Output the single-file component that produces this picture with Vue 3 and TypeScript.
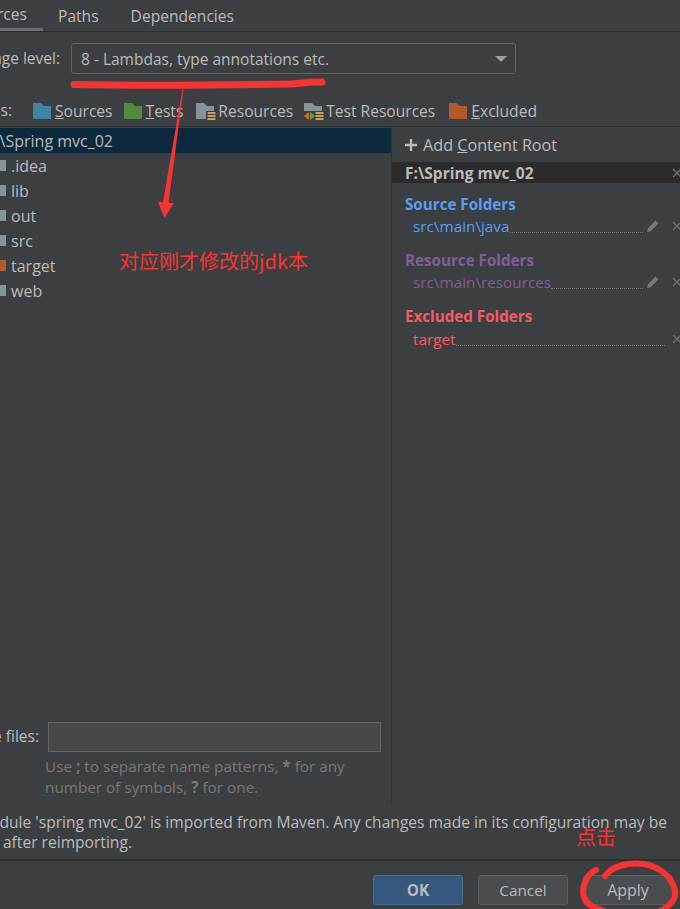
<script setup lang="ts">
interface Tag { key: string; after: string; icon: string }
const marks: Tag[] = [
  { key: 'S', after: 'ources', icon: 'sources' },
  { key: 'T', after: 'ests', icon: 'tests' },
  { key: '', after: 'Resources', icon: 'resources' },
  { key: '', after: 'Test Resources', icon: 'testres' },
  { key: 'E', after: 'xcluded', icon: 'excluded' },
]
const folderColors: Record<string, string> = {
  sources: '#3e86a0', tests: '#548a3f', resources: '#87939a', testres: '#87939a', excluded: '#b3592b',
}
const tree = [
  { name: '.idea', color: '#87939a' },
  { name: 'lib', color: '#87939a' },
  { name: 'out', color: '#87939a' },
  { name: 'src', color: '#87939a' },
  { name: 'target', color: '#b3592b' },
  { name: 'web', color: '#87939a' },
]
const groups = [
  { title: 'Source Folders', path: 'src\\main\\java', cls: 'blue', edit: true },
  { title: 'Resource Folders', path: 'src\\main\\resources', cls: 'purple', edit: true },
  { title: 'Excluded Folders', path: 'target', cls: 'red', edit: false },
]
</script>

<template>
  <div class="page">
    <nav class="tabs">
      <div class="tab-first"><span>Sources</span></div>
      <span class="tab paths">Paths</span>
      <span class="tab deps">Dependencies</span>
    </nav>

    <div class="level">
      <div class="level-label"><span>Language level:</span></div>
      <div class="combo">
        <span>8 - Lambdas, type annotations etc.</span>
        <i class="caret"></i>
      </div>
    </div>

    <div class="marks">
      <div class="marks-label"><span>Mark as:</span></div>
      <div v-for="m in marks" :key="m.icon" class="mark" :class="'m-' + m.icon">
        <svg width="22" height="18" viewBox="0 0 22 18">
          <path d="M0 1h8l3 3h7v13H0z" :fill="folderColors[m.icon]" />
          <g v-if="m.icon === 'resources' || m.icon === 'testres'">
            <rect x="10" y="9" width="12" height="9" fill="#3c3f41" />
            <path d="M11.500 11h8M11.500 14h8M11.500 17h8" stroke="#c9a15a" stroke-width="2" />
          </g>
          <g v-if="m.icon === 'testres'">
            <rect x="0" y="9" width="11" height="9" fill="#3c3f41" />
            <path d="M5 10v8L0 14z" fill="#e0672b" />
            <path d="M6 10v8l5-4z" fill="#62a744" />
          </g>
        </svg>
        <span><u v-if="m.key">{{ m.key }}</u>{{ m.after }}</span>
      </div>
    </div>

    <div class="split">
      <section class="left">
        <div class="root-row"><div class="root-name"><span>F:\Spring mvc_02</span></div></div>
        <div v-for="t in tree" :key="t.name" class="tree-row">
          <i class="tree-icon" :style="{ background: t.color }"></i>
          <span>{{ t.name }}</span>
        </div>
        <div class="spacer"></div>
        <div class="exclude">
          <div class="exclude-label"><span>Exclude files:</span></div>
          <div class="exclude-input"></div>
        </div>
        <p class="hint">Use <b>;</b> to separate name patterns, <b>*</b> for any<br />number of symbols, <b>?</b> for one.</p>
      </section>

      <aside class="right">
        <div class="add-root">
          <svg width="12" height="12" viewBox="0 0 12 12"><path d="M6 0v12M0 6h12" stroke="#bbb" stroke-width="2.400" /></svg>
          <span>Add <u>C</u>ontent Root</span>
        </div>
        <div class="root-head">
          <b>F:\Spring mvc_02</b>
          <svg class="x" width="10" height="10" viewBox="0 0 10 10"><path d="M1 1l8 8M9 1l-8 8" stroke="#6f7173" stroke-width="1.300" /></svg>
        </div>
        <div v-for="g in groups" :key="g.title" class="group" :class="g.cls">
          <h4>{{ g.title }}</h4>
          <div class="path-row">
            <span class="path">{{ g.path }}</span>
            <i class="dots"></i>
            <svg v-if="g.edit" class="pencil" width="14" height="14" viewBox="0 0 14 14"><path d="M1 13l.8-3.600L9.600 1.600l2.800 2.800-7.800 7.800zM10.600.6l2.800 2.800" fill="#77797b" /></svg>
            <svg class="x" width="10" height="10" viewBox="0 0 10 10"><path d="M1 1l8 8M9 1l-8 8" stroke="#6f7173" stroke-width="1.300" /></svg>
          </div>
        </div>
      </aside>
    </div>

    <div class="message">
      <div class="line-one"><span>Module 'spring mvc_02' is imported from Maven. Any changes made in its configuration may be</span></div>
      <div class="line-two"><span>lost after reimporting.</span></div>
    </div>

    <footer class="actions">
      <button class="btn primary">OK</button>
      <button class="btn">Cancel</button>
      <button class="btn apply">Apply</button>
    </footer>

    <svg class="ink" width="680" height="909" viewBox="0 0 680 909">
      <path d="M74 84.500C120 85.500 230 85 290 84C300 83.500 305 82 322 82" fill="none" stroke="#fb3232" stroke-width="7" stroke-linecap="round" />
      <path d="M182.500 89L183.500 89L168.500 203L174 203L164.500 218L158 202L163 202z" fill="#fb3232" />
      <path d="M596 870C586 874 581 888 584 897C587 905 594 908 604 911M605 876C612 866 628 862 644 864C660 867 672 877 675 890C677 900 670 906 660 911" fill="none" stroke="#fb3232" stroke-width="6" stroke-linecap="round" />
    </svg>
    <div class="note note-main">对应刚才修改的jdk本</div>
    <div class="note note-click">点击</div>
  </div>
</template>

<style>
html, body { margin: 0; background: #3c3f41; }
</style>

<style scoped>
.page {
  position: relative;
  width: 680px;
  height: 909px;
  overflow: hidden;
  display: flex;
  flex-direction: column;
  background: #3c3f41;
  color: #bbbbbb;
  font-family: "Open Sans", "Noto Sans", "Noto Sans CJK SC", sans-serif;
  font-size: 15.500px;
  line-height: 20px;
}
.tabs {
  flex: none;
  height: 31px;
  display: flex;
  align-items: center;
  border-bottom: 1px solid #2d2f30;
  font-size: 15.600px;
}
.tab-first {
  width: 43px;
  height: 31px;
  display: flex;
  justify-content: flex-end;
  align-items: center;
  padding-right: 16px;
  box-sizing: border-box;
  border-bottom: 3px solid #6a6e72;
  white-space: nowrap;
}
.tab { white-space: nowrap; }
.paths { margin-left: 15px; }
.deps { margin-left: 32px; }
.level {
  flex: none;
  height: 63px;
  display: flex;
  align-items: flex-start;
  padding-top: 11px;
  box-sizing: border-box;
}
.level-label {
  width: 60px;
  height: 31px;
  display: flex;
  justify-content: flex-end;
  align-items: center;
  white-space: nowrap;
  margin-top: -1px;
}
.combo {
  margin-left: 11px;
  width: 445px;
  height: 31px;
  box-sizing: border-box;
  border: 1px solid #646464;
  border-radius: 3px;
  display: flex;
  align-items: center;
  justify-content: space-between;
  padding: 0 9px;
  background: #3c3f41;
}
.caret {
  width: 0;
  height: 0;
  border-left: 6px solid transparent;
  border-right: 6px solid transparent;
  border-top: 6px solid #a0a0a0;
  margin-right: -1px;
}
.marks {
  flex: none;
  height: 32px;
  display: flex;
  align-items: center;
  border-bottom: 1px solid #2d2f30;
  box-sizing: border-box;
  padding-top: 1px;
  font-size: 15.600px;
}
.marks-label {
  width: 12px;
  display: flex;
  justify-content: flex-end;
  white-space: nowrap;
  margin-top: -2px;
}
.mark { display: flex; align-items: center; white-space: nowrap; }
.mark svg { flex: none; margin-top: -1px; }
.m-sources { margin-left: 21px; }
.m-tests { margin-left: 11px; }
.m-resources { margin-left: 13px; }
.m-testres { margin-left: 11px; }
.m-excluded { margin-left: 14px; }
.split {
  flex: 1;
  min-height: 0;
  display: flex;
}
.left {
  width: 391px;
  flex: none;
  display: flex;
  flex-direction: column;
  padding-top: 1px;
  box-sizing: border-box;
}
.root-row {
  height: 25px;
  background: #0d293e;
  display: flex;
  align-items: center;
  font-size: 16px;
}
.root-name {
  width: 113px;
  display: flex;
  justify-content: flex-end;
  white-space: nowrap;
}
.tree-row {
  height: 25px;
  display: flex;
  align-items: center;
  font-size: 16px;
}
.tree-icon {
  width: 6px;
  height: 11px;
  margin-right: 5px;
  flex: none;
}
.spacer { flex: 1; }
.exclude {
  display: flex;
  align-items: center;
  height: 30px;
}
.exclude-label {
  width: 39px;
  display: flex;
  justify-content: flex-end;
  white-space: nowrap;
  margin-top: -2px;
}
.exclude-input {
  margin-left: 9px;
  width: 333px;
  height: 30px;
  box-sizing: border-box;
  border: 1px solid #646464;
  background: #45494a;
}
.hint {
  margin: 4px 0 5px 45px;
  color: #787878;
  line-height: 21px;
  white-space: nowrap;
  font-size: 15.300px;
}
.right {
  flex: 1;
  min-width: 0;
  border-left: 1px solid #323232;
  display: flex;
  flex-direction: column;
}
.add-root {
  height: 35px;
  display: flex;
  align-items: center;
  padding-left: 13px;
  gap: 6px;
  white-space: nowrap;
  font-size: 16.200px;
}
.root-head {
  height: 21px;
  background: #2b2b2b;
  display: flex;
  align-items: center;
  justify-content: space-between;
  padding-left: 13px;
  margin-bottom: 11px;
  white-space: nowrap;
  font-size: 15.500px;
}
.root-head b { font-weight: 700; }
.x { flex: none; margin-right: -2px; }
.group { height: 56px; padding-left: 13px; }
.group h4 { margin: 0; font-size: 15.200px; font-weight: 700; line-height: 20px; white-space: nowrap; }
.path-row {
  display: flex;
  align-items: center;
  height: 24px;
  padding-left: 8px;
  white-space: nowrap;
  font-size: 15.300px;
}
.red .path-row { margin-top: 1px; }
.dots {
  flex: 1;
  align-self: flex-end;
  margin-bottom: 5px;
  border-bottom: 1px dotted #77797b;
  margin-right: 7px;
}
.pencil { flex: none; margin-left: -4px; margin-right: 12px; }
.blue h4, .blue .path { color: #589df6; }
.purple h4, .purple .path { color: #7f5f9a; }
.red h4, .red .path { color: #f95a5f; }
.message {
  flex: none;
  height: 56px;
  padding-top: 9px;
  box-sizing: border-box;
  line-height: 21px;
  font-size: 15.600px;
}
.line-one { width: 667px; display: flex; justify-content: flex-end; white-space: nowrap; }
.line-two { width: 132px; display: flex; justify-content: flex-end; white-space: nowrap; margin-top: -1px; }
.actions {
  flex: none;
  height: 50px;
  border-top: 2px solid #2f3031;
  box-sizing: border-box;
  display: flex;
  align-items: flex-start;
  padding: 14px 0 0 373px;
  gap: 15px;
}
.btn {
  width: 90px;
  height: 30px;
  box-sizing: border-box;
  border: 1px solid #5e6060;
  border-radius: 3px;
  background: #4a4d4f;
  color: #bbbbbb;
  font: inherit;
  font-size: 15.300px;
  padding: 0;
}
.apply { font-size: 16px; }
.primary {
  background: #365880;
  border-color: #4c708c;
  font-weight: 700;
}
.ink { position: absolute; left: 0; top: 0; pointer-events: none; }
.note {
  position: absolute;
  color: #fb3232;
  font-family: "Noto Sans CJK SC", sans-serif;
  white-space: nowrap;
}
.note-main { left: 119px; top: 246px; font-size: 20px; line-height: 30px; }
.note-click { left: 576px; top: 823px; font-size: 20px; line-height: 28px; }
</style>
